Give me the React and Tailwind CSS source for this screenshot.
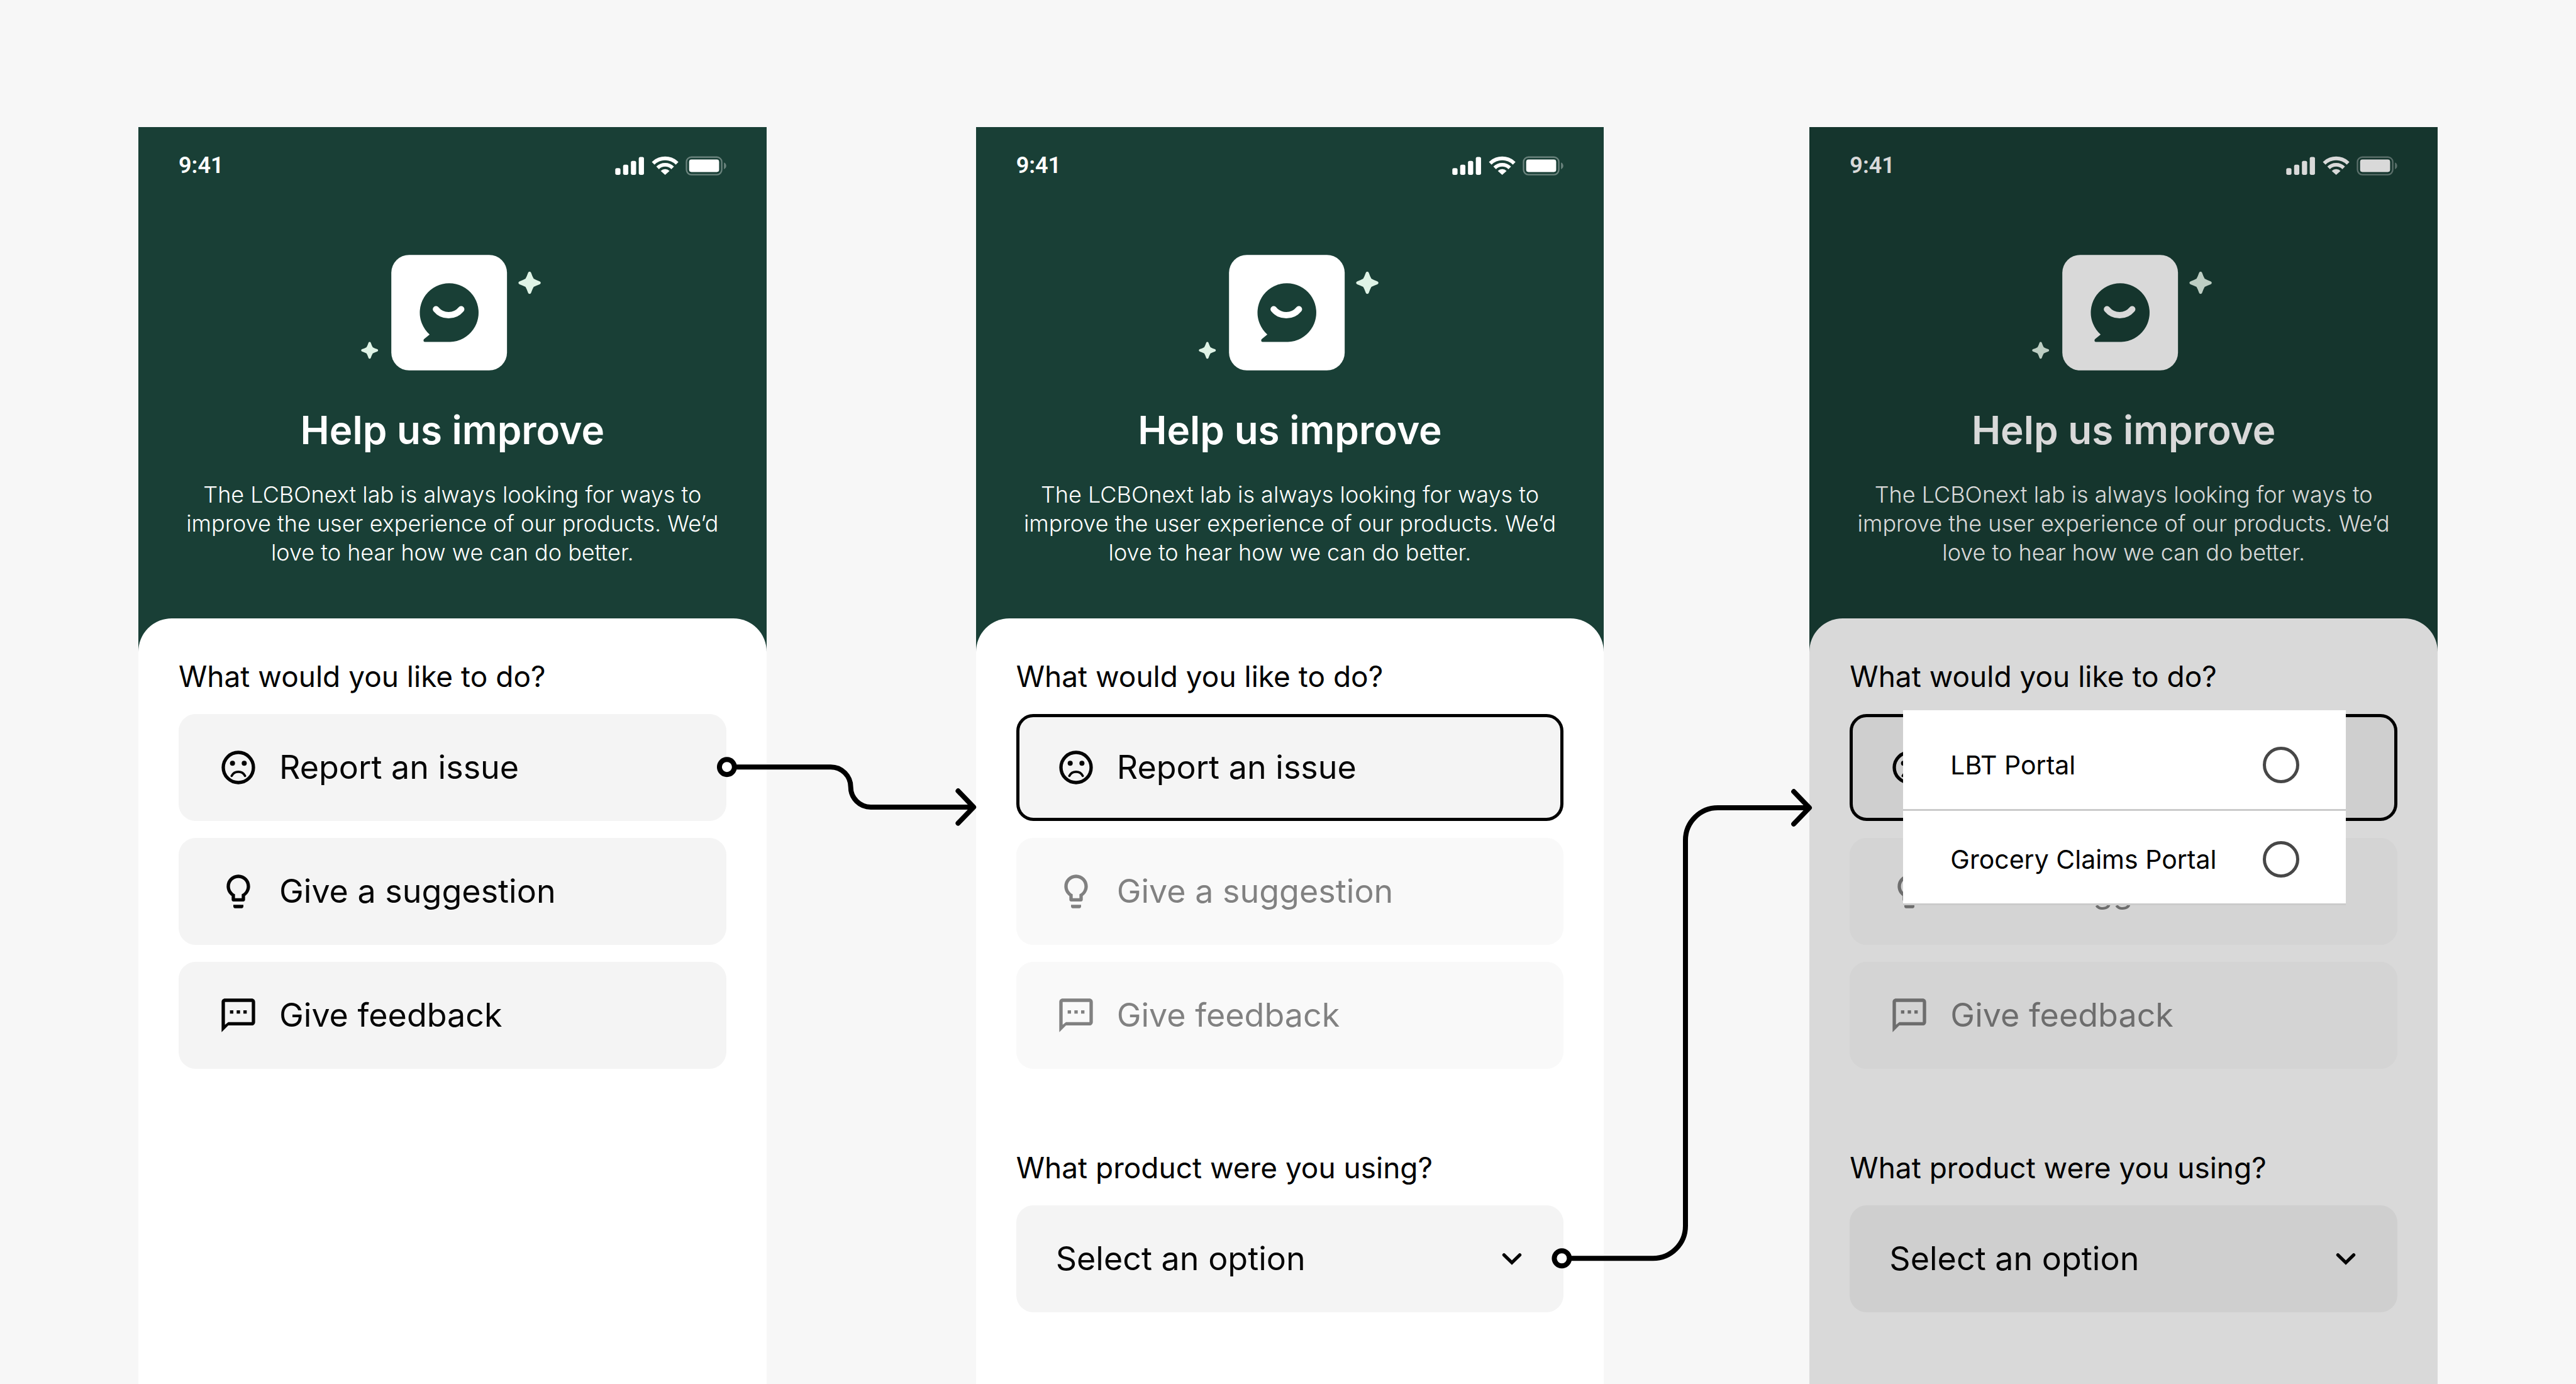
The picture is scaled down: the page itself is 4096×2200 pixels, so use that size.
import React from "react";

function StatusIcons() {
  return (
    <svg viewBox="66 59 597 103" className="w-[177px] h-[31px]" fill="#fff" aria-hidden="true">
      <rect x="67" y="123" width="28" height="36" rx="9" />
      <rect x="109" y="105" width="28" height="54" rx="9" />
      <rect x="151" y="84" width="28" height="75" rx="9" />
      <rect x="193" y="63" width="28" height="96" rx="9" />
      <path d="M270.2 97.7A91 91 0 0 1 398.8 97.7" fill="none" stroke="#fff" strokeWidth="20" />
      <path d="M294.2 121.7A57 57 0 0 1 374.8 121.7" fill="none" stroke="#fff" strokeWidth="20" />
      <path d="M334.5 159L311 138A34 34 0 0 1 358 138Z" />
      <rect x="449" y="64" width="189" height="94" rx="26" fill="none" stroke="#fff" strokeWidth="8" opacity="0.35" />
      <rect x="463" y="77" width="161" height="67" rx="12" />
      <path d="M650 93Q662 99 662 111Q662 123 650 129Z" opacity="0.35" />
    </svg>
  );
}

const STAR =
  "M-8 -54Q-6 -60 0 -60Q6 -60 8 -54Q14 -36 22 -22Q36 -14 54 -8Q60 -6 60 0Q60 6 54 8Q36 14 22 22Q14 36 8 54Q6 60 0 60Q-6 60 -8 54Q-14 36 -22 22Q-36 14 -54 8Q-60 6 -60 0Q-60 -6 -54 -8Q-36 -14 -22 -22Q-14 -36 -8 -54Z";

function Logo() {
  return (
    <svg viewBox="48 48 984 621" className="w-[291px] h-[184px]" aria-hidden="true">
      <rect x="211" y="48" width="622" height="621" rx="96" fill="#fff" />
      <path d="M528 516H391Q384 516 384 508Q384 503 388 500L417 476A158 158 0 1 1 528 516Z" fill="#193f36" />
      <path d="M451 340A88 88 0 0 0 587 340" fill="none" stroke="#fff" strokeWidth="34" strokeLinecap="round" />
      <path d={STAR} transform="translate(954.5 198)" fill="#dff3e6" />
      <path d={STAR} transform="translate(94.5 561) scale(0.76)" fill="#dff3e6" />
    </svg>
  );
}

function SadIcon() {
  return (
    <svg viewBox="0 0 24 24" className="size-16 shrink-0" fill="none" stroke="currentColor" aria-hidden="true">
      <circle cx="12" cy="12" r="9" strokeWidth="2" />
      <circle cx="8.5" cy="9.5" r="1.5" fill="currentColor" stroke="none" />
      <circle cx="15.5" cy="9.5" r="1.5" fill="currentColor" stroke="none" />
      <path d="M8 17A4.53 4.53 0 0 1 16 17" strokeWidth="1.4" strokeLinecap="round" />
    </svg>
  );
}

function BulbIcon() {
  return (
    <svg viewBox="0 0 24 24" className="size-16 shrink-0" fill="currentColor" aria-hidden="true">
      <path d="M9 21c0 .5.4 1 1 1h4c.6 0 1-.5 1-1v-1H9v1zm3-19C8.1 2 5 5.1 5 9c0 2.4 1.2 4.5 3 5.7V17c0 .5.4 1 1 1h6c.6 0 1-.5 1-1v-2.3c1.8-1.3 3-3.4 3-5.7 0-3.9-3.1-7-7-7zm2 11.7V16h-4v-2.3C8.5 13 7 11.3 7 9c0-2.8 2.2-5 5-5s5 2.2 5 5c0 2.3-1.5 4.1-3 4.7z" />
    </svg>
  );
}

function ChatIcon() {
  return (
    <svg viewBox="0 0 24 24" className="size-16 shrink-0" fill="currentColor" aria-hidden="true">
      <path d="M20 2H4c-1.1 0-2 .9-2 2v18l4-4h14c1.1 0 2-.9 2-2V4c0-1.1-.9-2-2-2zm0 14H6l-2 1.6V4h16v12z" />
      <path d="M7 9h2v2H7zM11 9h2v2h-2zM15 9h2v2h-2z" />
    </svg>
  );
}

const OPTIONS = [
  { label: "Report an issue", Icon: SadIcon },
  { label: "Give a suggestion", Icon: BulbIcon },
  { label: "Give feedback", Icon: ChatIcon },
];

function Option({ label, Icon, state }) {
  const tone =
    state === "selected" ? "border-black" : state === "faded" ? "border-transparent opacity-50" : "border-transparent";
  return (
    <button
      type="button"
      aria-pressed={state === "selected"}
      className={`flex h-[170px] w-full items-center gap-[33px] rounded-[27px] border-[5px] bg-[#f4f4f4] bg-origin-border pl-[58px] text-[52px] leading-none text-[#050505] ${tone}`}
    >
      <Icon />
      <span>{label}</span>
    </button>
  );
}

function ProductField({ id }) {
  return (
    <div className="mt-[129px]">
      <label htmlFor={id} className="block text-[46px] leading-[56px]">
        What product were you using?
      </label>
      <div className="relative mt-8">
        <select
          id={id}
          className="h-[170px] w-full appearance-none rounded-[27px] bg-[#f4f4f4] pl-[63px] pr-32 text-[52px] text-[#050505]"
        >
          <option>Select an option</option>
        </select>
        <svg
          viewBox="0 0 24 24"
          className="pointer-events-none absolute right-[50px] top-[53px] size-16"
          fill="none"
          stroke="#050505"
          strokeWidth="2"
          strokeLinecap="round"
          strokeLinejoin="miter"
          aria-hidden="true"
        >
          <path d="M7.3 9.7L12 14.3L16.7 9.7" />
        </svg>
      </div>
    </div>
  );
}

function PortalMenu() {
  return (
    <fieldset aria-label="Product" className="absolute left-[149px] right-[146px] top-[927px] bg-white pt-[10px]">
      {["LBT Portal", "Grocery Claims Portal"].map((name) => (
        <label
          key={name}
          className="flex h-[150px] items-center justify-between border-b-[3px] border-[#cbcbcb] pl-[75px] pr-[74px] pt-[7px] text-[41px] leading-none"
        >
          {name}
          <input
            type="radio"
            name="portal"
            className="size-[58px] shrink-0 appearance-none rounded-full border-[5px] border-[#474747] bg-white"
          />
        </label>
      ))}
    </fieldset>
  );
}

function Phone({ id, selected = false, dimmed = false }) {
  return (
    <section className="relative flex min-w-0 flex-1 flex-col bg-[#193f36]">
      <header className="flex flex-col items-center pb-[82px] pt-[33px] text-white">
        <div className="flex h-14 w-full items-center justify-between px-16">
          <span className="font-[Roboto,sans-serif] text-[36px] font-semibold leading-none">9:41</span>
          <StatusIcons />
        </div>
        <div className="mt-[114px]">
          <Logo />
        </div>
        <h1 className="mt-14 text-[62px] font-semibold leading-[78px]">Help us improve</h1>
        <p className="mt-10 max-w-[872px] text-center text-[36px] font-light leading-[46px]">
          The LCBOnext lab is always looking for ways to improve the user experience of our products. We’d love to hear
          how we can do better.
        </p>
      </header>
      <div className="flex-1 rounded-t-[53px] bg-white px-16 pt-16">
        <h2 className="text-[46px] leading-[56px]">What would you like to do?</h2>
        <div className="mt-8 flex flex-col gap-[27px]">
          {OPTIONS.map((option, i) => (
            <Option key={option.label} {...option} state={!selected ? "idle" : i === 0 ? "selected" : "faded"} />
          ))}
        </div>
        {selected && <ProductField id={id} />}
      </div>
      {dimmed && <div className="absolute inset-0 bg-black/15" />}
      {dimmed && <PortalMenu />}
    </section>
  );
}

export default function App() {
  return (
    <main className="flex min-h-screen overflow-hidden bg-[#f7f7f7] px-[220px] pt-[202px] font-[Inter,sans-serif] text-black">
      <Phone id="product-start" />
      <div className="relative z-10 w-[333px] shrink-0" aria-hidden="true">
        <svg
          viewBox="1280 1350 472 130"
          className="absolute left-[-82px] top-[996px] h-[115px] w-[419px]"
          fill="none"
          stroke="#000"
          strokeWidth="9"
          strokeLinecap="round"
          strokeLinejoin="round"
        >
          <path d="M1314 1374H1487A36 36 0 0 1 1523 1410A36 36 0 0 0 1559 1446H1743" />
          <path d="M1716 1417L1744 1446L1716 1475" />
          <circle cx="1300.5" cy="1374" r="13.5" fill="#fff" />
        </svg>
      </div>
      <Phone id="product-selected" selected />
      <div className="relative z-10 w-[327px] shrink-0" aria-hidden="true">
        <svg
          viewBox="2770 1400 480 875"
          className="absolute left-[-91px] top-[1041px] h-[777px] w-[426px]"
          fill="none"
          stroke="#000"
          strokeWidth="9"
          strokeLinecap="round"
          strokeLinejoin="round"
        >
          <path d="M2811 2253H2961A58 58 0 0 0 3019 2195V1504A58 58 0 0 1 3077 1446H3240" />
          <path d="M3213 1417L3241 1446L3213 1475" />
          <circle cx="2797.5" cy="2253" r="13.5" fill="#fff" />
        </svg>
      </div>
      <Phone id="product-menu" selected dimmed />
    </main>
  );
}
